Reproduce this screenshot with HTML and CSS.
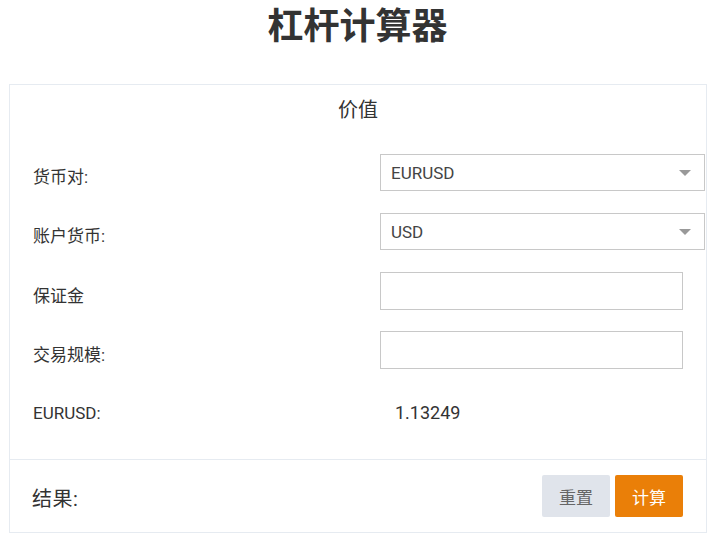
FILE: index.html
```html
<!DOCTYPE html>
<html lang="zh">
<head>
<meta charset="utf-8">
<title>杠杆计算器</title>
<link rel="stylesheet" href="styles.css">
</head>
<body>
<h1 class="title">杠杆计算器</h1>
<div class="card">
  <div class="card-head">价值</div>
  <div class="form">
    <div class="row">
      <label class="label">货币对:</label>
      <div class="select-wrap">
        <select class="select"><option>EURUSD</option></select>
        <span class="caret"></span>
      </div>
    </div>
    <div class="row">
      <label class="label">账户货币:</label>
      <div class="select-wrap">
        <select class="select"><option>USD</option></select>
        <span class="caret"></span>
      </div>
    </div>
    <div class="row">
      <label class="label">保证金</label>
      <input class="input" type="text">
    </div>
    <div class="row">
      <label class="label">交易规模:</label>
      <input class="input" type="text">
    </div>
    <div class="row row-rate">
      <span class="label label-rate">EURUSD:</span>
      <span class="value">1.13249</span>
    </div>
  </div>
  <div class="card-foot">
    <span class="result">结果:</span>
    <div class="actions">
      <button class="btn btn-reset">重置</button>
      <button class="btn btn-calc">计算</button>
    </div>
  </div>
</div>
</body>
</html>
```

FILE: styles.css
```css
* { box-sizing: border-box; }

body {
  margin: 0;
  background: #fff;
  font-family: Roboto, "Noto Sans CJK SC", sans-serif;
  color: #333;
}

.title {
  margin: 0;
  height: 84px;
  padding-top: 1px;
  line-height: 52px;
  text-align: center;
  font-size: 36px;
  font-weight: 700;
  color: #333;
}

.card {
  margin: 0 8px 0 9px;
  border: 1px solid #e6ebf1;
}

.card-head {
  height: 50px;
  line-height: 50px;
  text-align: center;
  font-size: 20px;
  color: #333;
}

.form {
  padding: 19px 1px 28px 23px;
  display: flex;
  flex-direction: column;
  gap: 22px;
}

.row {
  display: grid;
  grid-template-columns: 347px 1fr;
  align-items: center;
  height: 37px;
}

.row-rate {
  margin-top: 4px;
}

.label {
  font-size: 17px;
  color: #333;
  padding-top: 6px;
}

.label-rate {
  padding-top: 0;
  font-size: 17px;
}

.value {
  padding-left: 15px;
  font-size: 18px;
  color: #333;
}

.select-wrap {
  position: relative;
  height: 37px;
}

.select {
  appearance: none;
  -webkit-appearance: none;
  width: 100%;
  height: 37px;
  border: 1px solid #c8c8c8;
  border-radius: 0;
  background: #fff;
  padding: 0 0 0 10px;
  font-family: Roboto, "Noto Sans CJK SC", sans-serif;
  font-size: 17px;
  color: #444;
  outline: none;
}

.caret {
  position: absolute;
  right: 14px;
  top: 16px;
  width: 0;
  height: 0;
  border-left: 6px solid transparent;
  border-right: 6px solid transparent;
  border-top: 6px solid #999;
  pointer-events: none;
}

.input {
  width: 303px;
  height: 38px;
  border: 1px solid #c8c8c8;
  border-radius: 0;
  background: #fff;
  outline: none;
}

.card-foot {
  border-top: 1px solid #e6ebf1;
  padding: 15px 23px 15px 22px;
  display: flex;
  align-items: center;
  justify-content: space-between;
}

.result {
  font-size: 20px;
  color: #333;
  padding-top: 2px;
  letter-spacing: 0.5px;
}

.actions {
  display: flex;
  gap: 5px;
}

.btn {
  width: 68px;
  height: 42px;
  border: none;
  border-radius: 2px;
  font-family: Roboto, "Noto Sans CJK SC", sans-serif;
  font-size: 17px;
  padding: 0;
  cursor: pointer;
}

.btn-reset {
  background: #e0e4eb;
  color: #666;
}

.btn-calc {
  background: #ea7f08;
  color: #fff;
}
```
